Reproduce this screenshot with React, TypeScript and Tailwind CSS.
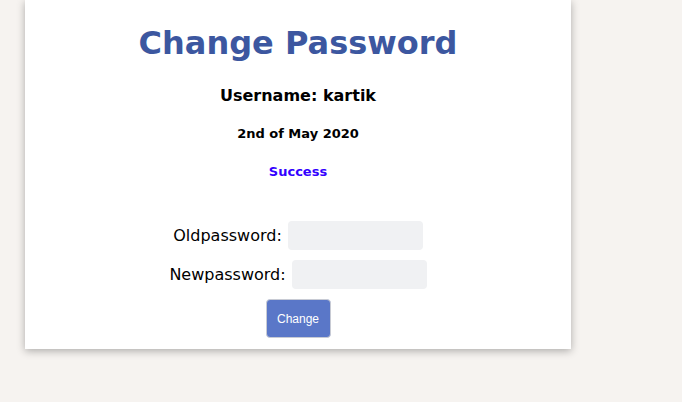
export default function App() {
  return (
    <div className="min-h-screen bg-[#f6f3f0] pl-[25px]" style={{ fontFamily: '"DejaVu Sans", Verdana, sans-serif' }}>
      <div className="w-[546px] bg-white pb-[11px] pt-[23px] shadow-[0_2px_8px_rgba(0,0,0,0.3)] flex flex-col items-center">
        <h1 className="text-[32px] font-bold leading-[40px] text-[#3c57a0]">Change Password</h1>
        <h2 className="mt-[23px] text-[16px] font-bold leading-[20px] text-black">Username: kartik</h2>
        <p className="mt-[20px] text-[13px] font-bold leading-[16px] text-black">2nd of May 2020</p>
        <p className="mt-[22px] text-[13px] font-bold leading-[16px] text-[#3300ff]">Success</p>
        <form className="mt-[41px] flex flex-col items-center gap-[10px]">
          <label className="flex items-center gap-[6px] text-[16px] text-black">
            Oldpassword:
            <input type="password" className="h-[29px] w-[135px] rounded-[4px] bg-[#f0f1f3] outline-none" />
          </label>
          <label className="flex items-center gap-[6px] text-[16px] text-black">
            Newpassword:
            <input type="password" className="h-[29px] w-[135px] rounded-[4px] bg-[#f0f1f3] outline-none" />
          </label>
          <button
            type="button"
            className="h-[39px] w-[65px] rounded-[4px] border border-[#c8cbd4] bg-[#5a77c8] text-[12px] text-white"
            style={{ fontFamily: '"Liberation Sans", Arial, sans-serif' }}
          >
            Change
          </button>
        </form>
      </div>
    </div>
  );
}
